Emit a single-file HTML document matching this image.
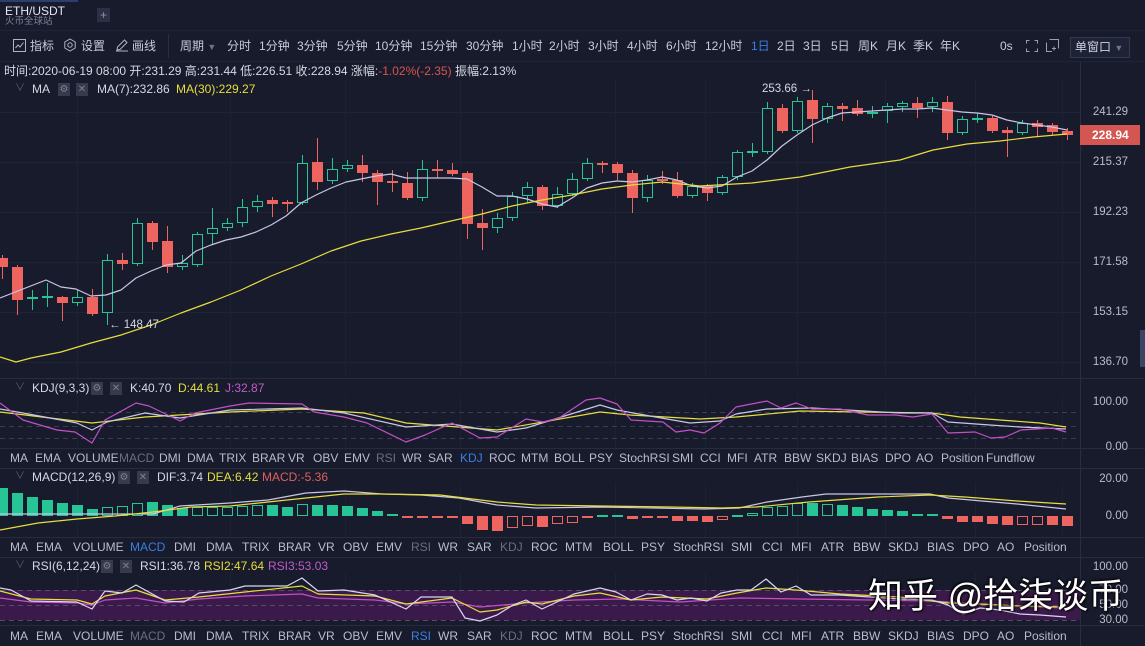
<!DOCTYPE html>
<html><head><meta charset="utf-8">
<style>
*{margin:0;padding:0;box-sizing:border-box}
html,body{width:1145px;height:646px;overflow:hidden;background:#171b2c;font-family:"Liberation Sans","Noto Sans CJK SC",sans-serif;font-size:12px;color:#c9cbd8}
.a{position:absolute;white-space:nowrap;line-height:14px}
.t{position:absolute;white-space:nowrap;line-height:14px;font-size:12px;color:#b9bccb}
.ax{position:absolute;left:1084px;width:44px;text-align:right;line-height:14px;font-size:11.5px;color:#b9bccb}
.ic{position:absolute;width:12px;height:13px;background:#363a4c;color:#7b7f92;font-size:10px;line-height:13px;text-align:center}
.hl{position:absolute;left:0;width:1145px;height:1px;background:#262a3c}
</style></head><body>
<!-- top bar -->
<div style="position:absolute;left:0;top:0;width:78px;height:2px;background:#2a3f70"></div>
<div class="a" style="left:5px;top:4px;color:#e4e6f0;font-size:12px">ETH/USDT</div>
<div class="a" style="left:5px;top:15px;color:#7e8296;font-size:9.5px">火币全球站</div>
<div style="position:absolute;left:97px;top:8px;width:13px;height:14px;background:#2b3044;color:#8c90a4;font-size:12px;line-height:14px;text-align:center">+</div>
<div class="hl" style="top:30px;background:#20243a"></div>
<div class="hl" style="top:61px;background:#20243a"></div>
<div style="position:absolute;left:168px;top:34px;width:1px;height:24px;background:#2a2e40"></div>
<!-- toolbar -->
<svg style="position:absolute;left:13px;top:39px" width="13" height="13"><rect x="0.5" y="0.5" width="12" height="12" fill="none" stroke="#b0b3c2"/><path d="M2.5 9 L5 6 L7 8 L10.5 3.5" fill="none" stroke="#b0b3c2"/></svg>
<div class="a" style="left:30px;top:39px">指标</div>
<svg style="position:absolute;left:63px;top:38px" width="14" height="14"><path d="M7 1 L12.2 4 L12.2 10 L7 13 L1.8 10 L1.8 4Z" fill="none" stroke="#b0b3c2"/><circle cx="7" cy="7" r="2.2" fill="none" stroke="#b0b3c2"/></svg>
<div class="a" style="left:81px;top:39px">设置</div>
<svg style="position:absolute;left:115px;top:38px" width="14" height="14"><path d="M2 12 L2.5 9 L9.5 2 L12 4.5 L5 11.5Z M1 13 H13" fill="none" stroke="#b0b3c2"/></svg>
<div class="a" style="left:132px;top:39px">画线</div>
<div class="a" style="left:180px;top:39px">周期 <span style="color:#70748a;font-size:9px">▼</span></div>
<div class="a" style="left:227px;top:39px">分时</div>
<div class="a" style="left:259px;top:39px">1分钟</div>
<div class="a" style="left:297px;top:39px">3分钟</div>
<div class="a" style="left:337px;top:39px">5分钟</div>
<div class="a" style="left:375px;top:39px">10分钟</div>
<div class="a" style="left:420px;top:39px">15分钟</div>
<div class="a" style="left:466px;top:39px">30分钟</div>
<div class="a" style="left:512px;top:39px">1小时</div>
<div class="a" style="left:549px;top:39px">2小时</div>
<div class="a" style="left:588px;top:39px">3小时</div>
<div class="a" style="left:627px;top:39px">4小时</div>
<div class="a" style="left:666px;top:39px">6小时</div>
<div class="a" style="left:705px;top:39px">12小时</div>
<div class="a" style="left:751px;top:39px;color:#3b7fe0">1日</div>
<div class="a" style="left:777px;top:39px">2日</div>
<div class="a" style="left:803px;top:39px">3日</div>
<div class="a" style="left:831px;top:39px">5日</div>
<div class="a" style="left:858px;top:39px">周K</div>
<div class="a" style="left:886px;top:39px">月K</div>
<div class="a" style="left:913px;top:39px">季K</div>
<div class="a" style="left:940px;top:39px">年K</div>
<div class="a" style="left:1000px;top:39px">0s</div>
<svg style="position:absolute;left:1026px;top:40px" width="12" height="12"><path d="M0.5 3.5V0.5H3.5 M8.5 0.5H11.5V3.5 M11.5 8.5V11.5H8.5 M3.5 11.5H0.5V8.5" fill="none" stroke="#9a9eb0"/></svg>
<svg style="position:absolute;left:1046px;top:39px" width="13" height="13"><path d="M3.5 0.5H12.5V9.5 M0.5 3.5V12.5 H6 M6 9.5h4 M8 7.5v4" fill="none" stroke="#9a9eb0"/></svg>
<div style="position:absolute;left:1070px;top:37px;width:60px;height:21px;border:1px solid #34394f;background:#1d2236"></div>
<div class="a" style="left:1075px;top:40px;color:#d0d2de">单窗口 <span style="color:#70748a;font-size:9px">▼</span></div>
<!-- info -->
<div class="a" style="left:4px;top:64px;color:#d6d8e3">时间:2020-06-19 08:00 开:231.29 高:231.44 低:226.51 收:228.94 涨幅:<span style="color:#d9534f">-1.02%(-2.35)</span> 振幅:2.13%</div>
<svg id="ch" style="position:absolute;left:0;top:0" width="1145" height="646"></svg>
<!-- MA title -->
<div class="a" style="left:15px;top:82px;color:#5c6075;font-size:10px">∨</div>
<div class="a" style="left:32px;top:82px;color:#d6d8e3">MA</div>
<div class="ic" style="left:58px;top:83px">⚙</div><div class="ic" style="left:76px;top:83px">✕</div>
<div class="a" style="left:97px;top:82px;color:#d6d8e3">MA(7):232.86</div>
<div class="a" style="left:176px;top:82px;color:#e7de3c">MA(30):229.27</div>
<div class="a" style="left:762px;top:82px;color:#d6d8e3;font-size:11.5px">253.66 →</div>
<div class="a" style="left:109px;top:318px;color:#d6d8e3;font-size:11.5px">← 148.47</div>
<!-- axis main -->
<div class="ax" style="top:105px">241.29</div>
<div class="ax" style="top:155px">215.37</div>
<div class="ax" style="top:205px">192.23</div>
<div class="ax" style="top:255px">171.58</div>
<div class="ax" style="top:305px">153.15</div>
<div class="ax" style="top:355px">136.70</div>
<div style="position:absolute;left:1080px;top:125px;width:60px;height:20px;background:#d45652"></div>
<div class="a" style="left:1092px;top:128px;color:#fff;font-weight:bold">228.94</div>
<div style="position:absolute;left:1140px;top:330px;width:5px;height:37px;background:#3c4465"></div>
<!-- KDJ -->
<div class="a" style="left:15px;top:381px;color:#5c6075;font-size:10px">∨</div>
<div class="a" style="left:32px;top:381px;color:#d6d8e3">KDJ(9,3,3)</div>
<div class="ic" style="left:91px;top:382px">⚙</div><div class="ic" style="left:110px;top:382px">✕</div>
<div class="a" style="left:130px;top:381px;color:#d6d8e3">K:40.70</div>
<div class="a" style="left:178px;top:381px;color:#e7de3c">D:44.61</div>
<div class="a" style="left:225px;top:381px;color:#c45bc8">J:32.87</div>
<div class="ax" style="top:395px">100.00</div>
<div class="ax" style="top:440px">0.00</div>
<!-- MACD -->
<div class="a" style="left:15px;top:470px;color:#5c6075;font-size:10px">∨</div>
<div class="a" style="left:32px;top:470px;color:#d6d8e3">MACD(12,26,9)</div>
<div class="ic" style="left:118px;top:471px">⚙</div><div class="ic" style="left:137px;top:471px">✕</div>
<div class="a" style="left:157px;top:470px;color:#d6d8e3">DIF:3.74</div>
<div class="a" style="left:207px;top:470px;color:#e7de3c">DEA:6.42</div>
<div class="a" style="left:262px;top:470px;color:#e0605c">MACD:-5.36</div>
<div class="ax" style="top:472px">20.00</div>
<div class="ax" style="top:509px">0.00</div>
<!-- RSI -->
<div class="a" style="left:15px;top:559px;color:#5c6075;font-size:10px">∨</div>
<div class="a" style="left:32px;top:559px;color:#d6d8e3">RSI(6,12,24)</div>
<div class="ic" style="left:101px;top:560px">⚙</div><div class="ic" style="left:120px;top:560px">✕</div>
<div class="a" style="left:140px;top:559px;color:#d6d8e3">RSI1:36.78</div>
<div class="a" style="left:204px;top:559px;color:#e7de3c">RSI2:47.64</div>
<div class="a" style="left:268px;top:559px;color:#c45bc8">RSI3:53.03</div>
<div class="ax" style="top:560px">100.00</div>
<div class="ax" style="top:583px">70.00</div>
<div class="ax" style="top:598px">50.00</div>
<div class="ax" style="top:613px">30.00</div>
<!-- KDJ tab row -->
<div class="t" style="left:10px;top:451px">MA</div><div class="t" style="left:35px;top:451px">EMA</div><div class="t" style="left:68px;top:451px">VOLUME</div><div class="t" style="left:119px;top:451px;color:#6a6e82">MACD</div><div class="t" style="left:159px;top:451px">DMI</div><div class="t" style="left:187px;top:451px">DMA</div><div class="t" style="left:219px;top:451px">TRIX</div><div class="t" style="left:252px;top:451px">BRAR</div><div class="t" style="left:288px;top:451px">VR</div><div class="t" style="left:313px;top:451px">OBV</div><div class="t" style="left:344px;top:451px">EMV</div><div class="t" style="left:376px;top:451px;color:#6a6e82">RSI</div><div class="t" style="left:402px;top:451px">WR</div><div class="t" style="left:428px;top:451px">SAR</div><div class="t" style="left:460px;top:451px;color:#3b7fe0">KDJ</div><div class="t" style="left:489px;top:451px">ROC</div><div class="t" style="left:521px;top:451px">MTM</div><div class="t" style="left:554px;top:451px">BOLL</div><div class="t" style="left:589px;top:451px">PSY</div><div class="t" style="left:619px;top:451px">StochRSI</div><div class="t" style="left:672px;top:451px">SMI</div><div class="t" style="left:700px;top:451px">CCI</div><div class="t" style="left:727px;top:451px">MFI</div><div class="t" style="left:754px;top:451px">ATR</div><div class="t" style="left:784px;top:451px">BBW</div><div class="t" style="left:816px;top:451px">SKDJ</div><div class="t" style="left:851px;top:451px">BIAS</div><div class="t" style="left:885px;top:451px">DPO</div><div class="t" style="left:916px;top:451px">AO</div><div class="t" style="left:941px;top:451px">Position</div><div class="t" style="left:986px;top:451px">Fundflow</div>
<!-- MACD tab row -->
<div class="t" style="left:10px;top:540px">MA</div><div class="t" style="left:36px;top:540px">EMA</div><div class="t" style="left:73px;top:540px">VOLUME</div><div class="t" style="left:130px;top:540px;color:#3b7fe0">MACD</div><div class="t" style="left:174px;top:540px">DMI</div><div class="t" style="left:206px;top:540px">DMA</div><div class="t" style="left:242px;top:540px">TRIX</div><div class="t" style="left:278px;top:540px">BRAR</div><div class="t" style="left:318px;top:540px">VR</div><div class="t" style="left:343px;top:540px">OBV</div><div class="t" style="left:376px;top:540px">EMV</div><div class="t" style="left:411px;top:540px;color:#6a6e82">RSI</div><div class="t" style="left:438px;top:540px">WR</div><div class="t" style="left:467px;top:540px">SAR</div><div class="t" style="left:500px;top:540px;color:#6a6e82">KDJ</div><div class="t" style="left:531px;top:540px">ROC</div><div class="t" style="left:565px;top:540px">MTM</div><div class="t" style="left:603px;top:540px">BOLL</div><div class="t" style="left:641px;top:540px">PSY</div><div class="t" style="left:673px;top:540px">StochRSI</div><div class="t" style="left:731px;top:540px">SMI</div><div class="t" style="left:762px;top:540px">CCI</div><div class="t" style="left:791px;top:540px">MFI</div><div class="t" style="left:821px;top:540px">ATR</div><div class="t" style="left:853px;top:540px">BBW</div><div class="t" style="left:888px;top:540px">SKDJ</div><div class="t" style="left:927px;top:540px">BIAS</div><div class="t" style="left:963px;top:540px">DPO</div><div class="t" style="left:997px;top:540px">AO</div><div class="t" style="left:1024px;top:540px">Position</div>
<!-- RSI tab row -->
<div class="t" style="left:10px;top:629px">MA</div><div class="t" style="left:36px;top:629px">EMA</div><div class="t" style="left:73px;top:629px">VOLUME</div><div class="t" style="left:130px;top:629px;color:#6a6e82">MACD</div><div class="t" style="left:174px;top:629px">DMI</div><div class="t" style="left:206px;top:629px">DMA</div><div class="t" style="left:242px;top:629px">TRIX</div><div class="t" style="left:278px;top:629px">BRAR</div><div class="t" style="left:318px;top:629px">VR</div><div class="t" style="left:343px;top:629px">OBV</div><div class="t" style="left:376px;top:629px">EMV</div><div class="t" style="left:411px;top:629px;color:#3b7fe0">RSI</div><div class="t" style="left:438px;top:629px">WR</div><div class="t" style="left:467px;top:629px">SAR</div><div class="t" style="left:500px;top:629px;color:#6a6e82">KDJ</div><div class="t" style="left:531px;top:629px">ROC</div><div class="t" style="left:565px;top:629px">MTM</div><div class="t" style="left:603px;top:629px">BOLL</div><div class="t" style="left:641px;top:629px">PSY</div><div class="t" style="left:673px;top:629px">StochRSI</div><div class="t" style="left:731px;top:629px">SMI</div><div class="t" style="left:762px;top:629px">CCI</div><div class="t" style="left:791px;top:629px">MFI</div><div class="t" style="left:821px;top:629px">ATR</div><div class="t" style="left:853px;top:629px">BBW</div><div class="t" style="left:888px;top:629px">SKDJ</div><div class="t" style="left:927px;top:629px">BIAS</div><div class="t" style="left:963px;top:629px">DPO</div><div class="t" style="left:997px;top:629px">AO</div><div class="t" style="left:1024px;top:629px">Position</div>
<!-- watermark -->
<div class="a" style="left:868px;top:576px;font-size:35px;line-height:42px;color:#fff;text-shadow:1px 1px 2px #000,-1px -1px 2px #000">知乎 @拾柒谈币</div>
<script>
var s=document.getElementById('ch'),h='';
function L(x1,y1,x2,y2,c,w,d){h+='<line x1="'+x1+'" y1="'+y1+'" x2="'+x2+'" y2="'+y2+'" stroke="'+c+'" stroke-width="'+(w||1)+'"'+(d?' stroke-dasharray="'+d+'"':'')+'/>';}
function P(p,c,w){h+='<polyline points="'+p+'" fill="none" stroke="'+c+'" stroke-width="'+(w||1.2)+'" stroke-linejoin="round"/>';}
// grids
[112,162,212,262,312,362].forEach(function(y){L(0,y+.5,1080,y+.5,'#1f2336');});
[77,230,345,460,615,705,797,885,975,1062].forEach(function(x){L(x+.5,80,x+.5,378,'#1d2134');L(x+.5,395,x+.5,448,'#1d2134');L(x+.5,483,x+.5,537,'#1d2134');L(x+.5,572,x+.5,625,'#1d2134');});
L(1080.5,62,1080.5,646,'#2a2e40');
[378,448,468,537,557,625].forEach(function(y){L(0,y+.5,1145,y+.5,'#272b3d');});
// rsi band
h+='<rect x="0" y="590" width="1080" height="30" fill="#3a1a4a"/>';
[412,426,438].forEach(function(y){L(0,y+.5,1080,y+.5,'#3a3e52',1,'5 4');});
[590,605,620].forEach(function(y){L(0,y+.5,1080,y+.5,'#5a4a6a',1,'5 4');});
// candles
var C=[["r",258,267,255,279],["r",267,300,265,315],["g",297,299,290,310],["g",296,297,283,307],["r",297,303,296,321],["g",297,303,290,306],["r",297,314,289,316],["g",260,313,254,325],["r",260,264,253,270],["g",223,264,218,266],["r",223,242,221,250],["r",241,267,226,273],["g",263,267,255,270],["g",234,265,232,267],["g",228,234,208,245],["g",223,228,218,231],["g",207,223,199,227],["g",201,207,195,212],["r",200,204,197,217],["r",202,203,200,212],["g",163,203,155,205],["r",162,182,138,190],["g",169,181,158,184],["g",165,169,160,172],["r",165,173,155,182],["r",173,182,170,205],["r",181,183,170,192],["r",183,198,172,200],["g",169,198,160,201],["r",169,171,160,178],["r",170,174,163,176],["r",173,224,171,239],["r",223,228,209,250],["g",218,228,213,233],["g",196,218,192,221],["g",187,196,182,203],["r",187,206,185,210],["g",194,206,187,208],["g",179,194,173,196],["g",163,179,158,181],["r",163,164,161,173],["r",164,173,162,180],["r",173,198,170,213],["g",180,198,175,202],["r",179,181,171,184],["r",180,196,172,198],["g",186,196,183,198],["r",186,193,184,201],["g",177,193,175,195],["g",152,177,150,180],["g",151,152,143,157],["g",108,152,102,154],["r",108,131,104,133],["g",101,131,97,133],["r",100,119,90,143],["g",106,119,103,123],["r",106,109,103,121],["r",108,114,100,116],["g",112,114,106,118],["g",106,111,103,123],["g",103,107,101,112],["r",103,108,97,118],["g",102,107,97,112],["r",102,133,96,140],["g",119,133,116,135],["g",118,119,113,123],["r",118,131,116,133],["r",130,133,127,157],["g",123,133,120,135],["r",123,127,120,137],["r",125,132,123,135],["r",131,135,128,140]];
var R='#ee6560',G='#27c495';
C.forEach(function(c,i){var x=2+15*i,col=c[0]=='r'?R:G;
L(x+.5,c[3],x+.5,c[1],col);L(x+.5,c[2],x+.5,c[4],col);
var hh=Math.max(c[2]-c[1],2);
if(c[0]=='r')h+='<rect x="'+(x-5)+'" y="'+c[1]+'" width="11" height="'+hh+'" fill="'+R+'"/>';
else if(hh<=3)h+='<rect x="'+(x-5)+'" y="'+c[1]+'" width="11" height="2" fill="'+G+'"/>';
else h+='<rect x="'+(x-4.5)+'" y="'+(c[1]+.5)+'" width="10" height="'+(hh-1)+'" fill="#171b2c" stroke="'+G+'"/>';});
L(1082,131.5,1087,131.5,'#ee6560');
// MA
P("0,298 46,280 61,287 76,289 91,296 106,295 121,290 136,278 151,271 166,265 181,263 196,251 211,245 226,240 241,237 256,232 271,225 286,216 301,203 316,195 331,188 346,182 361,179 376,176 391,174 406,178 421,178 436,178 451,178 467,179 482,187 497,196 512,196 527,199 542,204 557,207 572,198 587,188 602,183 617,181 632,182 647,180 662,177 677,180 692,186 707,188 722,186 737,177 752,171 767,160 782,146 797,135 812,125 827,118 842,113 857,112 872,111 887,110 902,109 917,109 932,108 947,110 962,112 977,113 992,115 1007,120 1022,123 1037,125 1052,127 1067,130",'#c9c6e6');
P("0,357 16,362 31,358 61,352 91,343 121,335 151,325 181,313 211,302 241,290 271,276 301,264 331,251 361,241 391,234 421,228 451,221 482,214 512,206 542,200 572,195 602,189 632,185 662,182 700,186 752,183 800,177 850,167 900,160 933,150 967,144 1000,141 1033,137 1067,134",'#e7de3c');
// KDJ
P("0,412 92,423 145,417 230,412 302,409 364,413 406,423 497,430 600,412 630,415 700,419 736,417 800,411 860,412 932,413 960,417 1000,420 1040,423 1066,427",'#e7de3c');
P("0,409 23,413 77,423 92,430 107,422 145,413 180,418 230,410 302,408 344,413 406,427 452,424 497,432 526,428 600,405 617,410 650,416 690,423 720,421 736,414 767,409 812,408 900,413 932,413 948,422 990,425 1020,427 1066,429",'#c9c6e6');
P("0,403 23,420 57,430 75,432 92,443 105,420 136,403 149,406 180,421 195,413 230,406 249,403 302,404 314,412 344,417 367,423 406,442 425,435 452,423 480,438 497,437 526,419 543,422 559,418 586,400 600,398 617,404 631,420 663,422 676,432 690,430 704,433 720,423 736,407 767,401 781,408 796,403 812,409 840,409 868,415 895,415 913,417 932,414 948,433 975,432 991,438 1005,437 1021,430 1052,428 1066,432",'#c450c6');
// MACD hist: [y, type] type S solid green, H hollow green, r red solid, h red hollow
var M=[[488,'S'],[493,'S'],[497,'S'],[500,'S'],[503,'S'],[505,'S'],[509,'S'],[507,'H'],[506,'H'],[503,'H'],[502,'S'],[505,'S'],[508,'S'],[507,'H'],[507,'H'],[507,'H'],[506,'H'],[505,'H'],[505,'S'],[507,'S'],[504,'H'],[505,'S'],[505,'S'],[506,'S'],[508,'S'],[511,'S'],[514,'S'],[518,'r'],[518,'r'],[518,'r'],[518,'r'],[524,'r'],[530,'r'],[531,'r'],[528,'h'],[526,'h'],[527,'r'],[524,'h'],[523,'h'],[518,'h'],[515,'S'],[515,'S'],[519,'r'],[518,'h'],[518,'r'],[521,'r'],[521,'r'],[522,'r'],[520,'h'],[515,'S'],[513,'H'],[507,'H'],[506,'H'],[503,'H'],[503,'S'],[504,'H'],[505,'S'],[507,'S'],[509,'S'],[510,'S'],[511,'S'],[514,'S'],[514,'S'],[519,'r'],[522,'r'],[522,'r'],[524,'r'],[525,'r'],[525,'h'],[525,'h'],[525,'r'],[526,'r']];
M.forEach(function(m,i){var x=2+15*i,y=m[0],t=m[1],top=Math.min(y,516),hh=Math.max(Math.abs(516-y),2);
if(t=='S'||t=='r')h+='<rect x="'+(x-5)+'" y="'+(y<516?y:516)+'" width="11" height="'+hh+'" fill="'+(t=='S'?G:R)+'"/>';
else h+='<rect x="'+(x-4.5)+'" y="'+(top+.5)+'" width="10" height="'+(hh-1)+'" fill="none" stroke="'+(t=='H'?G:R)+'"/>';});
P("0,514 153,514 180,506 230,503 268,500 306,493 344,491 383,494 421,495 459,498 497,505 536,508 600,507 704,509 739,508 767,502 802,497 826,494 930,494 948,498 982,501 1017,504 1066,509",'#c9c6e6');
P("0,530 38,523 77,519 115,516 153,512 191,507 230,506 268,502 306,498 344,494 383,494 440,495 497,502 536,505 600,506 670,507 722,508 756,507 809,502 878,497 930,495 965,497 1017,501 1066,504",'#e7de3c');
// RSI
P("0,598 31,602 77,603 92,605 105,600 136,598 165,603 199,599 245,596 302,594 318,598 375,600 406,604 452,602 480,607 526,603 574,600 620,599 680,602 740,598 800,599 870,600 932,601 980,604 1020,606 1066,608",'#c450c6');
P("0,591 31,599 77,600 92,604 105,596 136,590 165,600 199,597 245,592 302,586 318,594 375,596 406,604 452,598 480,612 497,610 526,602 542,604 574,596 600,593 631,600 662,597 707,599 737,593 766,588 796,590 840,594 900,597 948,603 980,604 1020,606 1066,607",'#e7de3c');
P("0,588 11,590 31,601 77,602 92,609 105,591 122,593 136,585 165,601 184,602 199,593 230,590 245,586 287,586 302,578 318,591 344,590 375,595 406,609 421,597 452,597 465,618 480,621 497,615 513,605 526,600 542,609 574,594 600,588 616,592 631,600 647,594 662,595 677,600 691,598 707,601 721,593 737,590 751,590 766,579 781,592 796,586 811,595 840,595 870,597 900,599 932,600 948,605 963,614 980,608 1000,610 1020,614 1040,615 1066,617",'#d8d6ee');
s.innerHTML=h;
</script>
</body></html>
